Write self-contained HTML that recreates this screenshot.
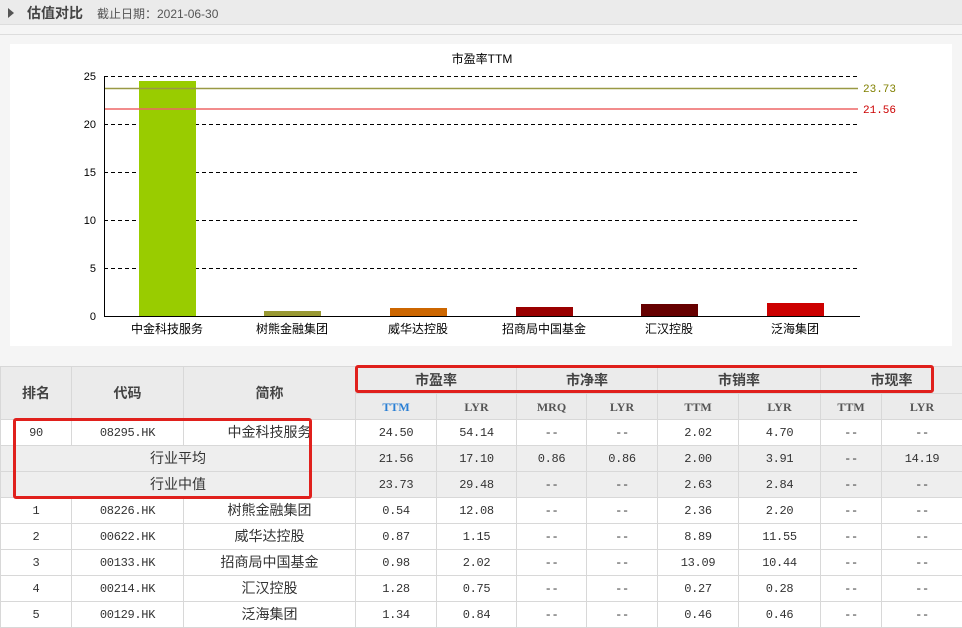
<!DOCTYPE html>
<html><head><meta charset="utf-8"><style>
*{margin:0;padding:0;box-sizing:border-box}
body{width:962px;height:628px;overflow:hidden;background:#f5f5f5;font-family:"Liberation Sans","Noto Sans CJK SC",sans-serif;position:relative}
.hdr{position:absolute;left:0;top:0;width:962px;height:25px;background:#ebebeb;border-bottom:1px solid #ddd}
.hdr .tri{position:absolute;left:8px;top:8px;width:0;height:0;border-left:6px solid #555;border-top:5px solid transparent;border-bottom:5px solid transparent}
.hdr .t{position:absolute;left:27px;top:3px;font-size:14px;font-weight:bold;color:#444}
.hdr .d{position:absolute;left:97px;top:5px;font-size:12px;color:#555}
.sep{position:absolute;left:0;top:34px;width:962px;height:1px;background:#ddd}
.panel{position:absolute;left:10px;top:44px;width:942px;height:302px;background:#fff}
table{position:absolute;left:0;top:366px;border-collapse:collapse;table-layout:fixed;width:962px;background:#fff}
td{border:1px solid #d8d8d8;text-align:center;font-size:12px;color:#333;height:26px;line-height:16px;vertical-align:middle;font-family:"Liberation Mono","Noto Sans CJK SC",monospace;padding:0;letter-spacing:-0.3px}
.h td{background:#ebebeb;font-family:"Liberation Sans","Noto Sans CJK SC",sans-serif;font-weight:bold;font-size:14px;color:#444;letter-spacing:0}
.h2 td{background:#ebebeb;font-size:12px;font-weight:bold;color:#555;font-family:"Liberation Serif",serif;letter-spacing:0}
.g td{background:#eeeeee}
.cn{font-family:"Liberation Sans","Noto Sans CJK SC",sans-serif!important;font-size:14px!important;letter-spacing:0!important;padding-bottom:2px!important}
.box{position:absolute;border:3px solid #e0201c;border-radius:3px}
</style></head><body>
<div class="hdr"><div class="tri"></div><div class="t">估值对比</div><div class="d">截止日期：2021-06-30</div></div>
<div class="sep"></div>
<div class="panel"></div>
<svg style="position:absolute;left:0;top:0" width="962" height="360">
<text x="482" y="63" font-size="12" text-anchor="middle" font-family="Liberation Sans,Noto Sans CJK SC,sans-serif">市盈率TTM</text>
<g stroke="#000" stroke-dasharray="4,3" stroke-width="1">
<line x1="104" x2="860" y1="76.5" y2="76.5"/><line x1="104" x2="860" y1="124.5" y2="124.5"/><line x1="104" x2="860" y1="172.5" y2="172.5"/><line x1="104" x2="860" y1="220.5" y2="220.5"/><line x1="104" x2="860" y1="268.5" y2="268.5"/>
</g>
<line x1="104.5" x2="104.5" y1="76" y2="316" stroke="#000"/>
<line x1="104" x2="860" y1="316.5" y2="316.5" stroke="#000"/>
<g font-size="11" text-anchor="end" font-family="Liberation Sans,sans-serif">
<text x="96" y="80">25</text><text x="96" y="128">20</text><text x="96" y="176">15</text><text x="96" y="224">10</text><text x="96" y="272">5</text><text x="96" y="320">0</text></g>
<rect x="139" y="81" width="57" height="235" fill="#99cc00"/>
<rect x="264" y="311" width="57" height="5" fill="#999933"/>
<rect x="390" y="308" width="57" height="8" fill="#cc6600"/>
<rect x="516" y="307" width="57" height="9" fill="#990000"/>
<rect x="641" y="304" width="57" height="12" fill="#660000"/>
<rect x="767" y="303" width="57" height="13" fill="#cc0000"/>
<line x1="105" x2="858" y1="88.5" y2="88.5" stroke="#999944" stroke-width="1.5"/>
<line x1="105" x2="858" y1="109" y2="109" stroke="#ee6666" stroke-width="1.5"/>
<text x="863" y="92" font-size="11" fill="#808000" font-family="Liberation Mono,monospace">23.73</text>
<text x="863" y="113" font-size="11" fill="#cc0000" font-family="Liberation Mono,monospace">21.56</text>
<g font-size="12" text-anchor="middle" font-family="Liberation Sans,Noto Sans CJK SC,sans-serif">
<text x="167" y="333">中金科技服务</text><text x="292" y="333">树熊金融集团</text><text x="418" y="333">威华达控股</text><text x="544" y="333">招商局中国基金</text><text x="669" y="333">汇汉控股</text><text x="795" y="333">泛海集团</text></g>
</svg>
<table>
<colgroup><col style="width:71px"><col style="width:112px"><col style="width:172px"><col style="width:81px"><col style="width:80px"><col style="width:70px"><col style="width:71px"><col style="width:81px"><col style="width:82px"><col style="width:61px"><col style="width:81px"></colgroup>
<tr class="h"><td rowspan="2" style="height:53px">排名</td><td rowspan="2">代码</td><td rowspan="2">简称</td><td colspan="2" style="height:27px">市盈率</td><td colspan="2">市净率</td><td colspan="2">市销率</td><td colspan="2">市现率</td></tr>
<tr class="h2"><td style="color:#2a7fd4">TTM</td><td>LYR</td><td>MRQ</td><td>LYR</td><td>TTM</td><td>LYR</td><td>TTM</td><td>LYR</td></tr>
<tr><td>90</td><td>08295.HK</td><td class="cn">中金科技服务</td><td>24.50</td><td>54.14</td><td>--</td><td>--</td><td>2.02</td><td>4.70</td><td>--</td><td>--</td></tr>
<tr class="g"><td colspan="3" class="cn">行业平均</td><td>21.56</td><td>17.10</td><td>0.86</td><td>0.86</td><td>2.00</td><td>3.91</td><td>--</td><td>14.19</td></tr>
<tr class="g"><td colspan="3" class="cn">行业中值</td><td>23.73</td><td>29.48</td><td>--</td><td>--</td><td>2.63</td><td>2.84</td><td>--</td><td>--</td></tr>
<tr><td>1</td><td>08226.HK</td><td class="cn">树熊金融集团</td><td>0.54</td><td>12.08</td><td>--</td><td>--</td><td>2.36</td><td>2.20</td><td>--</td><td>--</td></tr>
<tr><td>2</td><td>00622.HK</td><td class="cn">威华达控股</td><td>0.87</td><td>1.15</td><td>--</td><td>--</td><td>8.89</td><td>11.55</td><td>--</td><td>--</td></tr>
<tr><td>3</td><td>00133.HK</td><td class="cn">招商局中国基金</td><td>0.98</td><td>2.02</td><td>--</td><td>--</td><td>13.09</td><td>10.44</td><td>--</td><td>--</td></tr>
<tr><td>4</td><td>00214.HK</td><td class="cn">汇汉控股</td><td>1.28</td><td>0.75</td><td>--</td><td>--</td><td>0.27</td><td>0.28</td><td>--</td><td>--</td></tr>
<tr><td>5</td><td>00129.HK</td><td class="cn">泛海集团</td><td>1.34</td><td>0.84</td><td>--</td><td>--</td><td>0.46</td><td>0.46</td><td>--</td><td>--</td></tr>
</table>
<div class="box" style="left:355px;top:365px;width:579px;height:28px"></div>
<div class="box" style="left:13px;top:418px;width:299px;height:81px"></div>
</body></html>
